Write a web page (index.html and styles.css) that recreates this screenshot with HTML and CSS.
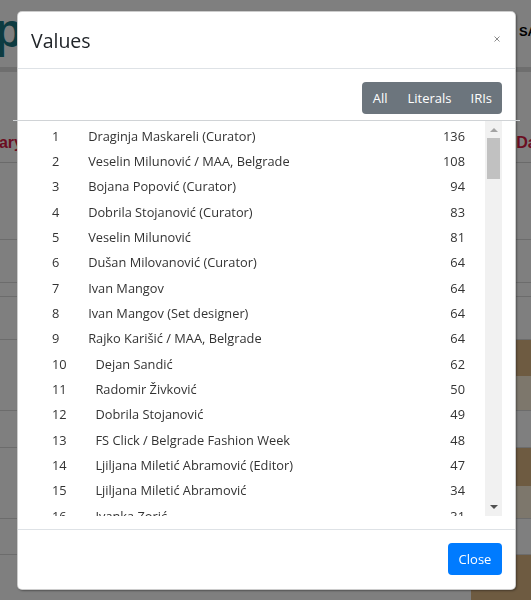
FILE: index.html
```html
<!DOCTYPE html>
<html lang="en">
<head>
<meta charset="utf-8">
<title>Values</title>
<link rel="stylesheet" href="styles.css">
</head>
<body>
<div class="page">
  <header class="topbar">
    <div class="logo">p</div>
    <div class="brand-right">SA</div>
  </header>
  <div class="table">
    <div class="thead">
      <div class="th th-left">Summary</div>
      <div class="th th-right">Date</div>
    </div>
    <div class="trow h77"><div class="cell"></div></div>
    <div class="trow h42"><div class="cell"></div></div>
    <div class="trow h13"><div class="cell"></div></div>
    <div class="trow h42"><div class="cell"></div></div>
    <div class="trow h36"><div class="cell brown"></div></div>
    <div class="trow h34"><div class="cell taupe"></div></div>
    <div class="trow h37"><div class="cell"></div></div>
    <div class="trow h38"><div class="cell brown"></div></div>
    <div class="trow h33"><div class="cell taupe"></div></div>
    <div class="trow h35"><div class="cell"></div></div>
    <div class="trow h60"><div class="cell brown"></div></div>
  </div>
</div>
<div class="backdrop"></div>
<div class="modal">
  <div class="modal-header">
    <h5 class="modal-title">Values</h5>
    <button class="close" aria-label="Close"><svg width="6" height="6" viewBox="0 0 6 6"><path d="M0.5 0.5L5.5 5.5M5.5 0.5L0.5 5.5" stroke="#8a8a8a" stroke-width="1"/></svg></button>
  </div>
  <div class="modal-body">
    <div class="toolbar">
      <div class="btn-group">
        <button class="btn-seg">All</button>
        <button class="btn-seg">Literals</button>
        <button class="btn-seg">IRIs</button>
      </div>
    </div>
    <div class="divider"></div>
    <div class="list-wrap">
      <div class="list">
        <div class="row"><span class="num">1</span><span class="name">Draginja Maskareli (Curator)</span><span class="count">136</span></div>
        <div class="row"><span class="num">2</span><span class="name">Veselin Milunović / MAA, Belgrade</span><span class="count">108</span></div>
        <div class="row"><span class="num">3</span><span class="name">Bojana Popović (Curator)</span><span class="count">94</span></div>
        <div class="row"><span class="num">4</span><span class="name">Dobrila Stojanović (Curator)</span><span class="count">83</span></div>
        <div class="row"><span class="num">5</span><span class="name">Veselin Milunović</span><span class="count">81</span></div>
        <div class="row"><span class="num">6</span><span class="name">Dušan Milovanović (Curator)</span><span class="count">64</span></div>
        <div class="row"><span class="num">7</span><span class="name">Ivan Mangov</span><span class="count">64</span></div>
        <div class="row"><span class="num">8</span><span class="name">Ivan Mangov (Set designer)</span><span class="count">64</span></div>
        <div class="row"><span class="num">9</span><span class="name">Rajko Karišić / MAA, Belgrade</span><span class="count">64</span></div>
        <div class="row"><span class="num">10</span><span class="name">Dejan Sandić</span><span class="count">62</span></div>
        <div class="row"><span class="num">11</span><span class="name">Radomir Živković</span><span class="count">50</span></div>
        <div class="row"><span class="num">12</span><span class="name">Dobrila Stojanović</span><span class="count">49</span></div>
        <div class="row"><span class="num">13</span><span class="name">FS Click / Belgrade Fashion Week</span><span class="count">48</span></div>
        <div class="row"><span class="num">14</span><span class="name">Ljiljana Miletić Abramović (Editor)</span><span class="count">47</span></div>
        <div class="row"><span class="num">15</span><span class="name">Ljiljana Miletić Abramović</span><span class="count">34</span></div>
        <div class="row"><span class="num">16</span><span class="name">Ivanka Zorić</span><span class="count">31</span></div>
        <div class="row"><span class="num">17</span><span class="name">Zoran Đukanović</span><span class="count">30</span></div>
      </div>
      <div class="scrollbar">
        <div class="arrow-up"></div>
        <div class="thumb"></div>
        <div class="track-fill"></div>
        <div class="arrow-down"></div>
      </div>
    </div>
  </div>
  <div class="modal-footer">
    <button class="btn-primary">Close</button>
  </div>
</div>
</body>
</html>
```
FILE: styles.css
```css
html, body {
  margin: 0;
  padding: 0;
  height: 100%;
  overflow: hidden;
  background: #ffffff;
  font-family: "Open Sans", "Noto Sans", sans-serif;
}

/* background page */
.page {
  width: 531px;
}
.topbar {
  height: 67px;
  border-bottom: 5px solid #dcdcdc;
  display: flex;
  justify-content: space-between;
  align-items: flex-start;
  overflow: hidden;
}
.logo {
  font-family: "Liberation Sans", Arial, sans-serif;
  font-weight: bold;
  font-size: 48px;
  line-height: 1;
  color: #1b7782;
  margin-left: -6px;
  margin-top: 7px;
}
.brand-right {
  font-family: "Liberation Sans", Arial, sans-serif;
  font-weight: bold;
  font-size: 13px;
  color: #000;
  margin-top: 24px;
  margin-right: -6px;
}
.table {
  display: flex;
  flex-direction: column;
}
.thead {
  height: 91px;
  border-bottom: 1px solid #d4d4d4;
  display: flex;
  justify-content: space-between;
  align-items: flex-end;
  padding-bottom: 10px;
  box-sizing: border-box;
}
.th {
  font-family: "Liberation Sans", Arial, sans-serif;
  font-weight: bold;
  font-size: 16px;
  color: #d71a42;
  white-space: nowrap;
}
.th-left {
  margin-left: -50px;
}
.th-right {
  margin-right: -20px;
}
.trow {
  display: flex;
  justify-content: flex-end;
  border-bottom: 1px solid #d8d8d8;
  box-sizing: border-box;
}
.cell {
  width: 60px;
  height: 100%;
}
.cell.brown { background: #dcb682; }
.cell.taupe { background: #fbeed9; }
.h77 { height: 77px; }
.h42 { height: 43px; }
.h13 { height: 14px; }
.h36 { height: 36px; border-bottom: 0; }
.h34 { height: 35px; }
.h37 { height: 37px; }
.h38 { height: 38px; border-bottom: 0; }
.h33 { height: 33px; }
.h35 { height: 36px; }
.h60 { height: 60px; }

/* overlay */
.backdrop {
  position: fixed;
  inset: 0;
  background: rgba(0, 0, 0, 0.5);
}

/* modal */
.modal {
  position: absolute;
  left: 17px;
  top: 11px;
  width: 499px;
  box-sizing: border-box;
  background: #fff;
  border: 1px solid rgba(0, 0, 0, 0.2);
  border-radius: 5px;
  box-shadow: 1px 1px 2px rgba(0, 0, 0, 0.35);
  color: #333;
}
.modal-header {
  height: 57px;
  box-sizing: border-box;
  padding: 14px 15px 12px 13px;
  border-bottom: 1px solid #dee2e6;
  display: flex;
  justify-content: space-between;
  align-items: center;
}
.modal-title {
  margin: 0;
  font-size: 19.5px;
  font-weight: 400;
  line-height: 30px;
  color: #212529;
}
.close {
  border: 0;
  background: transparent;
  padding: 0;
  margin: -5px 0 0 0;
  width: 6px;
  height: 6px;
  display: flex;
}
.modal-body {
  padding: 13px 13px 13px 13px;
  display: flex;
  flex-direction: column;
}
.toolbar {
  display: flex;
  justify-content: flex-end;
}
.btn-group {
  display: flex;
  height: 32px;
  background: #6c757d;
  border-radius: 4px;
}
.btn-seg {
  border: 0;
  background: transparent;
  color: #fff;
  font-family: "Open Sans", "Noto Sans", sans-serif;
  font-size: 13px;
  padding: 0 10px;
  height: 32px;
  cursor: pointer;
}
.btn-seg:first-child { padding-left: 11px; }
.btn-seg:last-child { padding-left: 9px; padding-right: 10px; }
.divider {
  margin: 6px -18px 0 -18px;
  border-top: 1px solid #d0d3d6;
}
.list-wrap {
  display: flex;
  height: 395px;
}
.list {
  flex: 1;
  overflow: hidden;
  padding-top: 2px;
  font-size: 12.8px;
}
.row {
  display: flex;
  align-items: center;
  height: 25.33px;
  padding-left: 21px;
  padding-right: 20px;
  white-space: nowrap;
}
.num {
  margin-right: 28.8px;
}
.name {
  flex: 1;
}
.count {
  text-align: right;
}
.scrollbar {
  width: 17px;
  background: #f1f1f1;
  display: flex;
  flex-direction: column;
  align-items: center;
}
.arrow-up {
  margin-top: 7px;
  width: 0;
  height: 0;
  border-left: 4px solid transparent;
  border-right: 4px solid transparent;
  border-bottom: 4px solid #a3a3a3;
}
.thumb {
  margin-top: 6px;
  width: 13px;
  height: 41px;
  background: #c1c1c1;
}
.track-fill {
  flex: 1;
}
.arrow-down {
  margin-bottom: 7px;
  width: 0;
  height: 0;
  border-left: 4px solid transparent;
  border-right: 4px solid transparent;
  border-top: 4px solid #505050;
}
.modal-footer {
  border-top: 1px solid #dee2e6;
  padding: 13px 13px 14px 13px;
  display: flex;
  justify-content: flex-end;
}
.btn-primary {
  border: 0;
  background: #007bff;
  color: #fff;
  font-family: "Open Sans", "Noto Sans", sans-serif;
  font-size: 13px;
  height: 32px;
  width: 54px;
  padding: 0;
  border-radius: 4px;
  cursor: pointer;
}
```
